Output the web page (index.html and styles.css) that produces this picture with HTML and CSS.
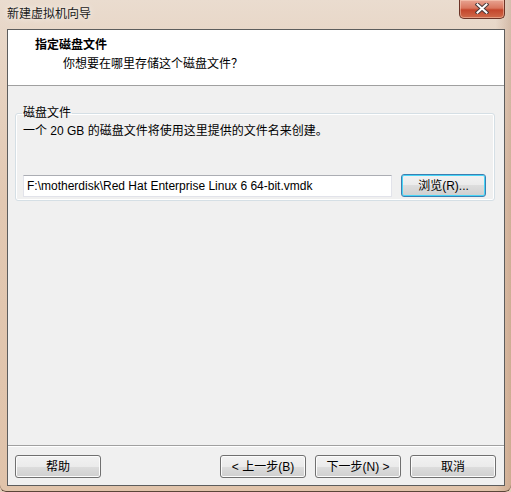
FILE: index.html
```html
<!DOCTYPE html>
<html lang="zh-CN">
<head>
<meta charset="utf-8">
<title>新建虚拟机向导</title>
<link rel="stylesheet" href="styles.css">
</head>
<body>
<div class="window">
  <div class="titlebar">
    <span class="title">新建虚拟机向导</span>
    <div class="close" aria-label="关闭">
      <svg width="14" height="11" viewBox="0 0 14 11">
        <path d="M2.5 1.5 L11.5 9.5 M11.5 1.5 L2.5 9.5" stroke="#4a3a3a" stroke-width="4" stroke-linecap="square" fill="none"/>
        <path d="M2.5 1.5 L11.5 9.5 M11.5 1.5 L2.5 9.5" stroke="#ffffff" stroke-width="2" stroke-linecap="square" fill="none"/>
      </svg>
    </div>
  </div>
  <div class="client">
    <div class="header">
      <div class="h-title">指定磁盘文件</div>
      <div class="h-sub">你想要在哪里存储这个磁盘文件？</div>
    </div>
    <div class="content">
      <fieldset class="group">
        <legend>磁盘文件</legend>
        <p class="desc">一个 20 GB 的磁盘文件将使用这里提供的文件名来创建。</p>
        <div class="file-row">
          <div class="field">F:\motherdisk\Red Hat Enterprise Linux 6 64-bit.vmdk</div>
          <div class="btn btn-focus">浏览(R)...</div>
        </div>
      </fieldset>
    </div>
    <div class="footer">
      <div class="btn">帮助</div>
      <div class="nav">
        <div class="btn">&lt; 上一步(B)</div>
        <div class="btn">下一步(N) &gt;</div>
        <div class="btn">取消</div>
      </div>
    </div>
  </div>
</div>
</body>
</html>
```

FILE: styles.css
```css
html, body {
  margin: 0;
  padding: 0;
  background: #e4cdb9;
}

body {
  font-family: "Liberation Sans", "Noto Sans CJK SC", sans-serif;
  font-size: 12px;
  color: #000;
}

.window {
  box-sizing: border-box;
  width: 511px;
  height: 492px;
  padding: 0 6px 6px 7px;
  display: flex;
  flex-direction: column;
  background:
    linear-gradient(90deg, rgba(255,255,255,0) 0%, rgba(255,255,255,0) 97%, rgba(150,100,70,0.25) 100%),
    linear-gradient(180deg, #eadccf 0px, #e8d7c8 30px, #e2c8b2 200px, #e0c3aa 100%);
  border-bottom-right-radius: 6px;
  border-bottom-left-radius: 6px;
  box-shadow: inset 0 -1px 0 #5a4638;
}

.titlebar {
  height: 29px;
  display: flex;
  justify-content: space-between;
  align-items: flex-start;
  flex: none;
}

.title {
  line-height: 16px;
  margin-top: 6px;
  color: #1a1a1a;
  text-shadow: 0 0 6px rgba(255,255,255,0.9);
}

.close {
  box-sizing: border-box;
  width: 46px;
  height: 19px;
  border: 1px solid #6b3326;
  border-top: none;
  border-radius: 0 0 5px 5px;
  background: linear-gradient(180deg, #e8a492 0%, #d9765e 45%, #c4462c 55%, #cf6a4a 100%);
  box-shadow: inset 0 0 0 1px rgba(255,220,200,0.45);
  display: flex;
  align-items: center;
  justify-content: center;
}

.close svg {
  display: block;
  margin-top: -1px;
}

.client {
  flex: 1;
  display: flex;
  flex-direction: column;
  border: 1px solid #5d5d5d;
  background: #f0f0f0;
}

.header {
  box-sizing: border-box;
  height: 56px;
  flex: none;
  background: #ffffff;
  border-bottom: 1px solid #a0a0a0;
  padding: 7px 0 0 27px;
}

.h-title {
  font-weight: bold;
  line-height: 16px;
}

.h-sub {
  line-height: 16px;
  margin-top: 3px;
  padding-left: 28px;
}

.content {
  flex: 1;
  padding: 0 9px 0 7px;
  border-bottom: 1px solid #a0a0a0;
  box-shadow: 0 1px 0 #ffffff;
}

.group {
  margin: 19px 0 0 0;
  padding: 2px 8px 3px 7px;
  border: 1px solid #d5dfe5;
  border-radius: 3px;
  box-shadow: inset 0 0 0 1px #ffffff;
  min-width: 0;
}

.group legend {
  padding: 0 1px;
  margin-left: -1px;
  line-height: 16px;
}

.desc {
  margin: 0;
  line-height: 16px;
}

.file-row {
  display: flex;
  align-items: flex-start;
  gap: 9px;
  margin-top: 35px;
}

.field {
  box-sizing: border-box;
  width: 369px;
  height: 22px;
  margin-top: 1px;
  padding: 0 3px;
  line-height: 20px;
  background: #ffffff;
  border: 1px solid #e2e3ea;
  border-top-color: #abadb3;
  white-space: nowrap;
  overflow: hidden;
}

.btn {
  box-sizing: border-box;
  width: 86px;
  height: 23px;
  border: 1px solid #707070;
  border-radius: 3px;
  background: linear-gradient(180deg, #f2f2f2 0%, #ebebeb 50%, #dddddd 50%, #cfcfcf 100%);
  box-shadow: inset 0 0 0 1px #fcfcfc;
  display: flex;
  align-items: center;
  justify-content: center;
  line-height: 16px;
  white-space: nowrap;
}

.btn-focus {
  width: 85px;
  border-color: #3c7fb1;
  box-shadow: inset 0 0 0 1px #48d5f7;
}

.footer {
  flex: none;
  height: 39px;
  box-sizing: border-box;
  padding: 9px 8px 0 7px;
  display: flex;
  justify-content: space-between;
  align-items: flex-start;
}

.nav {
  display: flex;
  gap: 9px;
}
```
